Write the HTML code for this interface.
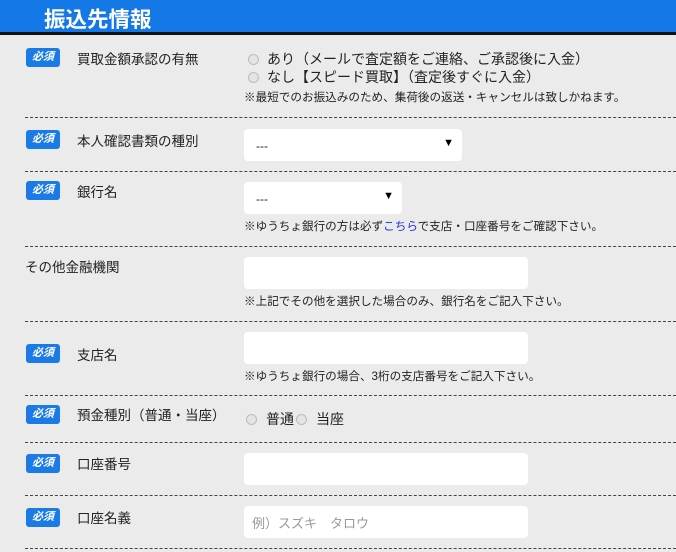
<!DOCTYPE html>
<html><head><meta charset="utf-8"><style>
*{margin:0;padding:0;box-sizing:border-box}
body{width:676px;height:552px;background:#ebebeb;font-family:"Liberation Sans","Noto Sans CJK JP",sans-serif;color:#222;position:relative;overflow:hidden}
.hd{position:absolute;left:0;top:0;width:676px;height:35px;background:#1478e6;border-bottom:3px solid #111}
.hd span{position:absolute;left:44px;top:3px;color:#fff;font-size:21.5px;font-weight:bold}
.line{position:absolute;left:25px;right:0;border-top:1px dashed #444;height:0}
.bd{position:absolute;left:26px;width:34px;height:19px;background:#1a7ae6;border-radius:3px;color:#fff;font-size:11px;font-weight:bold;font-style:italic;text-align:center;line-height:19px}
.lb{position:absolute;font-size:13.5px;color:#222}
.in{position:absolute;left:244px;width:284px;height:32px;background:#fff;border-radius:4px}
.sel{position:absolute;left:244px;height:32px;background:#fff;border-radius:4px;font-size:12px;padding:10px 0 0 12px}
.sel i{position:absolute;right:8px;top:8px;font-style:normal;font-size:11px;color:#000}
.nt{position:absolute;font-size:11.6px;color:#222}
.rd{display:inline-block;width:11px;height:11px;border-radius:50%;border:1px solid #bbb;background:#e4e4e4;vertical-align:-1px;margin-right:8px}
.tx{position:absolute;font-size:14px;color:#222}
</style></head><body>
<div class="hd"><span>振込先情報</span></div>

<div class="bd" style="top:48px">必須</div>
<div class="lb" style="left:77px;top:48px">買取金額承認の有無</div>
<div class="tx" style="left:248px;top:49px"><span class="rd"></span>あり（メールで査定額をご連絡、ご承認後に入金）</div>
<div class="tx" style="left:248px;top:67px"><span class="rd"></span>なし【スピード買取】（査定後すぐに入金）</div>
<div class="nt" style="left:244px;top:89px">※最短でのお振込みのため、集荷後の返送・キャンセルは致しかねます。</div>
<div class="line" style="top:117px"></div>

<div class="bd" style="top:130px">必須</div>
<div class="lb" style="left:77px;top:130px">本人確認書類の種別</div>
<div class="sel" style="top:129px;width:218px">---<i>▼</i></div>
<div class="line" style="top:171px"></div>

<div class="bd" style="top:181px">必須</div>
<div class="lb" style="left:77px;top:181px">銀行名</div>
<div class="sel" style="top:182px;width:158px">---<i>▼</i></div>
<div class="nt" style="left:244px;top:218px">※ゆうちょ銀行の方は必ず<span style="color:#2233dd">こちら</span>で支店・口座番号をご確認下さい。</div>
<div class="line" style="top:246px"></div>

<div class="lb" style="left:25px;top:256px">その他金融機関</div>
<div class="in" style="top:257px"></div>
<div class="nt" style="left:244px;top:293px">※上記でその他を選択した場合のみ、銀行名をご記入下さい。</div>
<div class="line" style="top:321px"></div>

<div class="bd" style="top:344px">必須</div>
<div class="lb" style="left:77px;top:344px">支店名</div>
<div class="in" style="top:332px"></div>
<div class="nt" style="left:244px;top:368px">※ゆうちょ銀行の場合、3桁の支店番号をご記入下さい。</div>
<div class="line" style="top:395px"></div>

<div class="bd" style="top:405px">必須</div>
<div class="lb" style="left:77px;top:404px">預金種別（普通・当座）</div>
<div class="tx" style="left:246px;top:409px"><span class="rd" style="margin-right:9px"></span>普通<span class="rd" style="margin-left:2px;margin-right:9px"></span>当座</div>
<div class="line" style="top:442px"></div>

<div class="bd" style="top:454px">必須</div>
<div class="lb" style="left:77px;top:453px">口座番号</div>
<div class="in" style="top:453px"></div>
<div class="line" style="top:495px"></div>

<div class="bd" style="top:508px">必須</div>
<div class="lb" style="left:77px;top:507px">口座名義</div>
<div class="in" style="top:506px"><span style="position:absolute;left:8px;top:7px;font-size:13px;color:#999">例）スズキ　タロウ</span></div>
<div class="line" style="top:548px"></div>
</body></html>
